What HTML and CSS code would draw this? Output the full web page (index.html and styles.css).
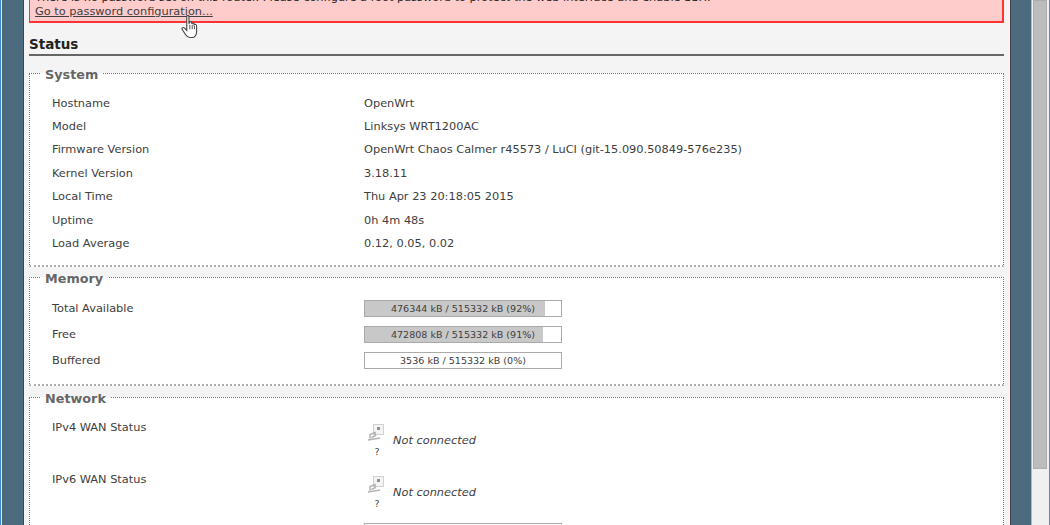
FILE: index.html
```html
<!DOCTYPE html>
<html lang="en">
<head>
<meta charset="utf-8">
<title>OpenWrt - Status</title>
<link rel="stylesheet" href="styles.css">
</head>
<body>
<div class="window">
  <div class="edge-left"></div>
  <div class="band"></div>
  <main class="content">
    <div class="alert">
      <p class="alert-text">There is no password set on this router. Please configure a root password to protect the web interface and enable SSH.</p>
      <a class="alert-link" href="#">Go to password configuration...</a>
    </div>
    <h2 class="title">Status</h2>

    <fieldset class="section section-system">
      <legend>System</legend>
      <table class="rows">
        <tr><td class="key">Hostname</td><td>OpenWrt</td></tr>
        <tr><td class="key">Model</td><td>Linksys WRT1200AC</td></tr>
        <tr><td class="key">Firmware Version</td><td>OpenWrt Chaos Calmer r45573 / LuCI (git-15.090.50849-576e235)</td></tr>
        <tr><td class="key">Kernel Version</td><td>3.18.11</td></tr>
        <tr><td class="key">Local Time</td><td>Thu Apr 23 20:18:05 2015</td></tr>
        <tr><td class="key">Uptime</td><td>0h 4m 48s</td></tr>
        <tr><td class="key">Load Average</td><td>0.12, 0.05, 0.02</td></tr>
      </table>
    </fieldset>

    <fieldset class="section section-memory">
      <legend>Memory</legend>
      <table class="rows rows-bars">
        <tr><td class="key">Total Available</td><td><div class="bar"><div class="fill" style="width:92%"></div><span>476344 kB / 515332 kB (92%)</span></div></td></tr>
        <tr><td class="key">Free</td><td><div class="bar"><div class="fill" style="width:91%"></div><span>472808 kB / 515332 kB (91%)</span></div></td></tr>
        <tr><td class="key">Buffered</td><td><div class="bar"><span>3536 kB / 515332 kB (0%)</span></div></td></tr>
      </table>
    </fieldset>

    <fieldset class="section section-network">
      <legend>Network</legend>
      <table class="rows rows-net">
        <tr><td class="key">IPv4 WAN Status</td><td>
          <div class="wan">
            <div class="wan-icon">
              <svg width="17" height="18" viewBox="0 0 17 18"><rect x="6.500" y="0.500" width="10" height="10" fill="#f4f4f4" stroke="#d0d0d0"/><rect x="10" y="3" width="3" height="3" fill="#909090"/><path d="M1 16 L13 14 M3 14.500 L3 10.500 L8 8.500 L8.500 11.500 L4.500 13.500" fill="none" stroke="#b4b4b4" stroke-width="1.500"/></svg>
              <small>?</small>
            </div>
            <em>Not connected</em>
          </div>
        </td></tr>
        <tr class="row-short"><td class="key">IPv6 WAN Status</td><td>
          <div class="wan">
            <div class="wan-icon">
              <svg width="17" height="18" viewBox="0 0 17 18"><rect x="6.500" y="0.500" width="10" height="10" fill="#f4f4f4" stroke="#d0d0d0"/><rect x="10" y="3" width="3" height="3" fill="#909090"/><path d="M1 16 L13 14 M3 14.500 L3 10.500 L8 8.500 L8.500 11.500 L4.500 13.500" fill="none" stroke="#b4b4b4" stroke-width="1.500"/></svg>
              <small>?</small>
            </div>
            <em>Not connected</em>
          </div>
        </td></tr>
        <tr><td class="key"></td><td><div class="bar"></div></td></tr>
      </table>
    </fieldset>
  </main>
  <div class="band band-right"></div>
  <div class="scrollbar"><div class="thumb"></div></div>
  <div class="edge-right"></div>
  <svg class="cursor" width="17" height="23" viewBox="0.500 1 15 21"><path d="M5.500 2.500 C5.500 1 7.500 1 7.500 2.500 L7.500 9 L8 7.700 C8.500 6.700 10 6.900 10 8.200 L10 9 C10.500 8 12.200 8.200 12.200 9.500 L12.200 10 C13 9.200 14.500 9.600 14.500 11 L14.500 16 C14.500 19 13 21.500 10 21.500 L8.500 21.500 C6.500 21.500 5.500 20.500 4.500 19 L1.500 14.500 C0.500 13 2 11.700 3.500 13 L5.500 15 Z" fill="#fff" stroke="#444" stroke-width="1"/><path d="M8.300 10 V14 M10.500 10 V14 M12.500 11 V14" stroke="#666" fill="none"/></svg>
</div>
</body>
</html>
```
FILE: styles.css
```css
* { box-sizing: border-box; }
html, body { margin: 0; padding: 0; height: 525px; overflow: hidden; background: #4c6b7f; }
body { font-family: "DejaVu Sans", Verdana, sans-serif; font-size: 11.35px; color: #404040; }
.window { position: relative; display: flex; width: 1050px; height: 525px; overflow: hidden; }
.edge-left { width: 1px; background: #3d8fd1; flex: none; }
.band { width: 22px; flex: none; background: #4c6b7f; border-left: 1px solid #dfe6ea; }
.band-right { width: 21px; border-left: 0; border-right: 1px solid #a9bcc8; }
.content { flex: none; width: 988px; height: 525px; overflow: hidden; background: #f4f4f4; border-left: 1px solid #444; border-right: 1px solid #444; padding: 0 6px 0 5px; }
.alert { margin-top: -13px; height: 36px; background: #ffcccc; border: 1px solid #ff3333; border-width: 1px 2px 2px 1px; padding: 0 5px; line-height: 12px; color: #333; }
.alert-text { margin: 0; height: 17px; padding-top: 3px; white-space: nowrap; color: #222; }
.alert-link { color: #404040; display: block; line-height: 13px; }
.title { margin: 13px 0 0; height: 20px; font-size: 13.5px; line-height: 17px; font-weight: bold; color: #222; border-bottom: 2px solid #666; }
.section { margin: 0; padding: 0; background: #fff; border: 1px dotted #777; border-bottom: 2px dotted #aaa; min-width: 0; }
.section legend { position: relative; top: 1px; margin-left: 10px; padding: 0 5px; font-size: 12.8px; font-weight: bold; color: #666; line-height: 13px; }
.section-system { margin-top: 11px; height: 200px; }
.section-memory { margin-top: 4px; height: 115px; }
.section-network { margin-top: 5px; height: 140px; }
.rows { border-collapse: collapse; margin: 11px 0 0 22px; }
.rows td { padding: 0; height: 23.4px; line-height: 14px; vertical-align: middle; }
.rows .key { width: 312px; }
.rows-bars { margin-top: 11px; }
.rows-bars td { height: 26px; }
.rows-net { margin-top: 16px; }
.rows-net td { vertical-align: top; height: 52px; }
.rows-net .row-short td { height: 51px; }
.bar { position: relative; width: 198px; height: 17px; background: #fff; border: 1px solid #aaa; text-align: center; font-size: 9.55px; line-height: 15px; overflow: hidden; }
.bar .fill { position: absolute; left: 0; top: 0; bottom: 0; background: #c8c8c8; }
.bar span { position: relative; }
.wan { display: flex; align-items: center; gap: 9px; margin-left: 3px; margin-top: 4px; height: 34px; }
.wan-icon { width: 17px; text-align: center; display: flex; flex-direction: column; align-items: center; }
.wan-icon svg { display: block; }
.wan-icon small { font-size: 9.5px; line-height: 14px; color: #404040; margin: 3px 0 0 3px; }
.wan em { font-style: italic; position: relative; top: -1px; }
.scrollbar { width: 17px; flex: none; background: #f0f0f0; padding: 0 2px 0 1px; }
.thumb { height: 469px; background: #bcbcbc; border: 1px solid #adadad; }
.edge-right { width: 1px; flex: none; background: #3d8fd1; }
.cursor { position: absolute; left: 181px; top: 15px; }
```
